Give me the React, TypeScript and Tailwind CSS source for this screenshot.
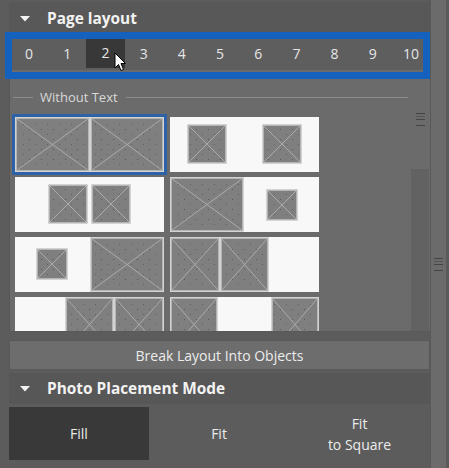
import React from "react";

type R = [number, number, number, number];

const thumbs: R[][] = [
  [[0, 0, 75, 55], [75, 0, 74, 55]],
  [[17, 7, 40, 40], [92, 7, 40, 40]],
  [[33, 7, 40, 40], [76, 7, 40, 40]],
  [[0, 0, 74, 55], [96, 12, 32, 32]],
  [[21, 11, 32, 32], [75, 0, 74, 55]],
  [[0, 0, 50, 55], [50, 0, 49, 55]],
  [[50, 0, 49, 55], [99, 0, 50, 55]],
  [[0, 0, 48, 55], [101, 0, 48, 55]],
];

function Thumb({ rects, idx }: { rects: R[]; idx: number }) {
  const pid = `dots${idx}`;
  return (
    <svg width="149" height="55" viewBox="0 0 149 55" className="block">
      <defs>
        <pattern id={pid} width="12" height="10" patternUnits="userSpaceOnUse">
          <rect x="2" y="2" width="1" height="1" fill="#5a5a5a" />
          <rect x="8" y="7" width="1" height="1" fill="#606060" />
        </pattern>
      </defs>
      <rect x="0" y="0" width="149" height="55" fill="#f8f8f8" />
      {rects.map(([x, y, w, h], i) => (
        <g key={i}>
          <rect x={x + 1} y={y + 1} width={w - 2} height={h - 2} fill="#7f7f7f" stroke="#c6c6c6" strokeWidth="1.5" />
          <rect x={x + 3} y={y + 3} width={w - 6} height={h - 6} fill={`url(#${pid})`} />
          <line x1={x + 1.5} y1={y + 1.5} x2={x + w - 1.5} y2={y + h - 1.5} stroke="#ababab" strokeWidth="1" />
          <line x1={x + w - 1.5} y1={y + 1.5} x2={x + 1.5} y2={y + h - 1.5} stroke="#ababab" strokeWidth="1" />
        </g>
      ))}
    </svg>
  );
}

function Grip() {
  return (
    <div className="flex flex-col gap-[2px] w-[9px]">
      <div className="h-[1px] bg-[#444444]" />
      <div className="h-[1px] bg-[#555555]" />
      <div className="h-[1px] bg-[#444444]" />
      <div className="h-[1px] bg-transparent" />
      <div className="h-[1px] bg-[#444444]" />
    </div>
  );
}

function Tri() {
  return (
    <svg width="10" height="6" viewBox="0 0 10 6" className="block">
      <path d="M0 0 L10 0 L5 5.5 Z" fill="#f2f2f2" />
    </svg>
  );
}

const font = { fontFamily: '"Open Sans", "Noto Sans", Arial, sans-serif' };

export default function App() {
  const nums = Array.from({ length: 11 }, (_, i) => i);
  return (
    <div className="relative w-[449px] h-[468px] bg-[#5c5c5c] flex overflow-hidden text-[#e8e8e8]" style={font}>
      <div className="w-[9px] shrink-0" />
      <div className="w-[421px] shrink-0 flex flex-col">
        <div className="h-[2px] shrink-0" />
        <div className="h-[30px] shrink-0 bg-[#585858] flex items-center pt-[3px]">
          <div className="ml-[11px] w-[27px]">
            <Tri />
          </div>
          <span className="text-[15.4px] font-bold text-[#f2f2f2] leading-none">Page layout</span>
        </div>
        <div className="h-[299px] shrink-0 bg-[#6b6b6b] border-l border-[#575757] flex flex-col">
          <div className="mt-[4px] h-[34px] shrink-0 bg-[#5e5e5e] flex">
            {nums.map((n) => (
              <div
                key={n}
                className={`flex-1 flex items-center justify-center text-[14px] text-[#e6e6e6] ${n === 2 ? "bg-[#383838] h-[32px]" : ""}`}
              >
                {n}
              </div>
            ))}
          </div>
          <div className="h-[261px] shrink-0 flex">
            <div className="flex-1 flex flex-col overflow-hidden">
              <div className="mt-[18px] h-[18px] shrink-0 flex items-center">
                <div className="ml-[3px] w-[20px] h-[1px] bg-[#8c8c8c]" />
                <span className="ml-[7px] text-[13px] text-[#d8d8d8] leading-none">Without Text</span>
                <div className="ml-[8px] mr-[3px] flex-1 h-[1px] bg-[#8c8c8c]" />
              </div>
              <div className="mt-[11px] ml-[5px] shrink-0 grid grid-cols-[149px_149px] gap-x-[6px] gap-y-[5px]">
                {thumbs.map((t, i) => (
                  <div key={i} className={i === 0 ? "outline-[3px] outline-solid outline-[#2e62a6]" : ""}>
                    <Thumb rects={t} idx={i} />
                  </div>
                ))}
              </div>
            </div>
            <div className="w-[19px] shrink-0 flex flex-col">
              <div className="h-[99px] shrink-0 flex items-center justify-center">
                <Grip />
              </div>
              <div className="flex-1 bg-[#626262] mr-[1px]" />
            </div>
          </div>
        </div>
        <div className="h-[1px] shrink-0 bg-[#595959]" />
        <div className="h-[8px] shrink-0" />
        <div className="h-[30px] shrink-0 bg-[#6d6d6d] border border-[#585858] flex items-center justify-center text-[14px] text-[#ececec]">
          Break Layout Into Objects
        </div>
        <div className="h-[3px] shrink-0" />
        <div className="h-[31px] shrink-0 bg-[#575757] flex items-center">
          <div className="ml-[11px] w-[27px]">
            <Tri />
          </div>
          <span className="text-[15.4px] font-bold text-[#f2f2f2] leading-none">Photo Placement Mode</span>
        </div>
        <div className="h-[3px] shrink-0" />
        <div className="h-[53px] shrink-0 flex text-[14px] text-[#ececec]">
          <div className="w-[140px] bg-[#393939] flex items-center justify-center">Fill</div>
          <div className="w-[140px] flex items-center justify-center">Fit</div>
          <div className="flex-1 flex items-center justify-center text-center leading-[21px]">
            Fit
            <br />
            to Square
          </div>
        </div>
      </div>
      <div className="w-[16px] shrink-0 bg-[#6b6b6b] border-l border-[#595959] flex flex-col items-center">
        <div className="mt-[258px]">
          <Grip />
        </div>
      </div>
      <div className="w-[3px] shrink-0 bg-[#5a5a5a]" />

      <div className="absolute left-[5px] top-[32px] w-[425px] h-[47px] border-[7px] border-[#1462be]" />
      <svg className="absolute left-[114px] top-[52px]" width="13" height="21" viewBox="0 0 13 21">
        <path d="M1 1 L1 16 L4.5 12.5 L7 18.5 L9.5 17.5 L7 11.5 L11.5 11.5 Z" fill="#ffffff" stroke="#000000" strokeWidth="1" strokeLinejoin="round" />
      </svg>
    </div>
  );
}
